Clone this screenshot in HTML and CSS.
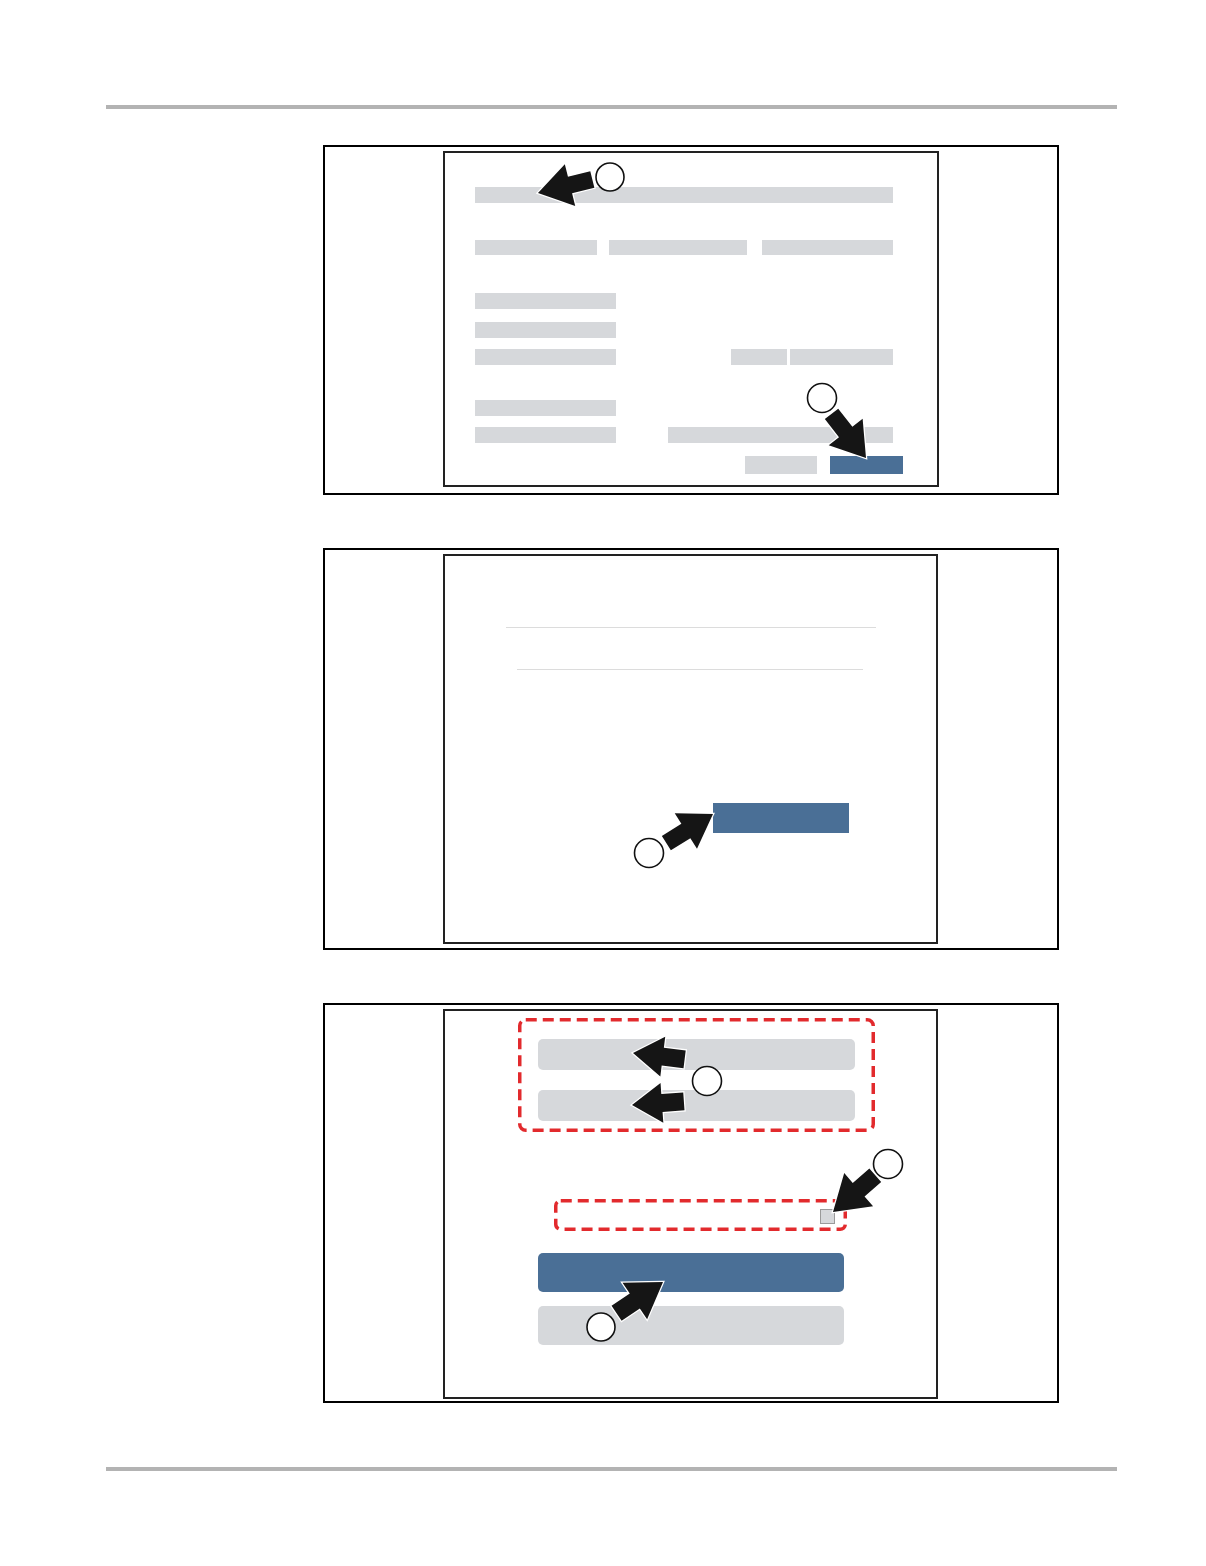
FILE: index.html
```html
<!DOCTYPE html>
<html lang="en">
<head>
<meta charset="utf-8">
<title>Manual figures</title>
<link rel="stylesheet" href="styles.css">
</head>
<body>
<div class="page">
  <div class="rule rule-top"></div>

  <!-- Figure 1 -->
  <div class="figure fig1">
    <div class="screen screen1">
      <div class="row r-a"><span class="bar w418"></span></div>
      <div class="row r-b"><span class="bar w122"></span><span class="bar w138 ml12"></span><span class="bar w131 ml15"></span></div>
      <div class="row r-c"><span class="bar w141"></span></div>
      <div class="row r-d"><span class="bar w141"></span></div>
      <div class="row r-e"><span class="bar w141"></span><span class="bar w56 ml115"></span><span class="bar w103 ml3"></span></div>
      <div class="row r-f"><span class="bar w141"></span></div>
      <div class="row r-g"><span class="bar w141"></span><span class="bar w225 ml52"></span></div>
      <div class="row r-h"><span class="btn grey w72"></span><span class="btn blue w73 ml13"></span></div>
    </div>
    <svg class="callouts" width="736" height="350" viewBox="323 145 736 350">
      <defs>
        <polygon id="arw" points="0,0 -33,-21.5 -33,-8.5 -56,-8.5 -56,8.5 -33,8.5 -33,21.5"/>
      </defs>
      <circle class="num" cx="610" cy="177" r="14"/>
      <use href="#arw" class="arrow" transform="translate(538 193) rotate(166)"/>
      <circle class="num" cx="822" cy="398" r="14.5"/>
      <use href="#arw" class="arrow" transform="translate(866 458) rotate(52)"/>
    </svg>
  </div>

  <!-- Figure 2 -->
  <div class="figure fig2">
    <div class="screen screen2">
      <div class="line l1"></div>
      <div class="line l2"></div>
      <div class="btn blue wide2"></div>
    </div>
    <svg class="callouts" width="736" height="402" viewBox="323 548 736 402">
      <defs>
        <polygon id="arw2" points="0,0 -32,-21 -32,-8.5 -55,-8.5 -55,8.5 -32,8.5 -32,21"/>
      </defs>
      <circle class="num" cx="649" cy="853" r="14.5"/>
      <use href="#arw2" class="arrow" transform="translate(713 814) rotate(-32)"/>
    </svg>
  </div>

  <!-- Figure 3 -->
  <div class="figure fig3">
    <div class="screen screen3">
      <div class="group box1">
        <div class="pill grey"></div>
        <div class="pill grey"></div>
      </div>
      <div class="group box2">
        <span class="check"></span>
      </div>
      <div class="pill blue big"></div>
      <div class="pill grey big"></div>
    </div>
    <svg class="callouts" width="736" height="400" viewBox="323 1003 736 400">
      <defs>
        <polygon id="arw3" points="0,0 -30,-20 -30,-9 -52,-9 -52,9 -30,9 -30,20"/>
        <polygon id="arw4" points="0,0 -34,-22 -34,-9 -56,-9 -56,9 -34,9 -34,22"/>
      </defs>
      <rect class="dash" x="519.75" y="1019.75" width="353.5" height="110.5" rx="6"/>
      <rect class="dash" x="555.75" y="1200.75" width="289.5" height="28.5" rx="5"/>
      <use href="#arw3" class="arrow" transform="translate(633 1053) rotate(187)"/>
      <use href="#arw3" class="arrow" transform="translate(632 1105) rotate(176)"/>
      <circle class="num" cx="707" cy="1081" r="14.5"/>
      <circle class="num" cx="888" cy="1164" r="14.5"/>
      <use href="#arw4" class="arrow" transform="translate(833 1212) rotate(139)"/>
      <use href="#arw4" class="arrow" transform="translate(663 1282) rotate(-34)"/>
      <circle class="num" cx="601" cy="1327" r="14"/>
    </svg>
  </div>

  <div class="rule rule-bottom"></div>
</div>
</body>
</html>
```

FILE: styles.css
```css
* { box-sizing: border-box; }

html, body {
  margin: 0;
  padding: 0;
  background: #ffffff;
  font-family: "Liberation Sans", Arial, sans-serif;
}

.page {
  width: 1206px;
  min-height: 1566px;
  padding-top: 105px;
  display: flex;
  flex-direction: column;
}

.rule {
  margin-left: 106px;
  width: 1011px;
  height: 4px;
  background: #b3b3b3;
}

.rule-bottom { margin-top: 64px; }

.figure {
  position: relative;
  margin-left: 323px;
  width: 736px;
  border: 2px solid #000;
}

.fig1 { margin-top: 36px; height: 350px; }
.fig2 { margin-top: 53px; height: 402px; }
.fig3 { margin-top: 53px; height: 400px; }

.screen {
  margin-left: 118px;
  margin-top: 4px;
  border: 2px solid #222;
  background: #fff;
}

.callouts {
  position: absolute;
  left: -2px;
  top: -2px;
  overflow: visible;
}

.num {
  fill: #fff;
  stroke: #111;
  stroke-width: 1.6;
}

.arrow {
  fill: #151515;
  stroke: #fff;
  stroke-width: 2.5;
  stroke-linejoin: miter;
  paint-order: stroke;
}

.dash {
  fill: none;
  stroke: #e22a2d;
  stroke-width: 3.5;
  stroke-dasharray: 11 6;
}

/* ---------- Figure 1 ---------- */
.screen1 {
  width: 496px;
  height: 336px;
  padding-left: 30px;
  display: flex;
  flex-direction: column;
}

.row { display: flex; height: 16px; }
.r-a { margin-top: 34px; }
.r-b { margin-top: 37px; height: 15px; }
.r-c { margin-top: 38px; }
.r-d { margin-top: 13px; }
.r-e { margin-top: 11px; }
.r-f { margin-top: 35px; }
.r-g { margin-top: 11px; }
.r-h { margin-top: 13px; height: 18px; }
.r-h .btn:first-child { margin-left: 270px; }

.bar {
  display: block;
  height: 100%;
  background: #d6d8db;
}

.btn { display: block; height: 100%; }
.grey { background: #d6d8db; }
.blue { background: #4a6f96; }

.w418 { width: 418px; }
.w122 { width: 122px; }
.w138 { width: 138px; }
.w131 { width: 131px; }
.w141 { width: 141px; }
.w56 { width: 56px; }
.w103 { width: 103px; }
.w225 { width: 225px; }
.w72 { width: 72px; }
.w73 { width: 73px; }

.ml3 { margin-left: 3px; }
.ml12 { margin-left: 12px; }
.ml13 { margin-left: 13px; }
.ml15 { margin-left: 15px; }
.ml52 { margin-left: 52px; }
.ml115 { margin-left: 115px; }

/* ---------- Figure 2 ---------- */
.screen2 {
  width: 495px;
  height: 390px;
  display: flex;
  flex-direction: column;
}

.line {
  height: 1px;
  background: #dcdcdc;
}
.l1 { margin-top: 71px; margin-left: 61px; width: 370px; }
.l2 { margin-top: 41px; margin-left: 72px; width: 346px; }

.wide2 {
  margin-top: 133px;
  margin-left: 268px;
  width: 136px;
  height: 30px;
}

/* ---------- Figure 3 ---------- */
.screen3 {
  width: 495px;
  height: 390px;
  display: flex;
  flex-direction: column;
  padding-left: 93px;
}

.box1 {
  margin-top: 8px;
  margin-left: -20px;
  width: 357px;
  height: 114px;
  padding: 20px 0 0 20px;
  display: flex;
  flex-direction: column;
  gap: 20px;
}

.pill {
  border-radius: 5px;
}

.box1 .pill {
  width: 317px;
  height: 31px;
}

.box2 {
  margin-top: 67px;
  margin-left: 16px;
  width: 293px;
  height: 32px;
  display: flex;
  align-items: center;
  justify-content: flex-end;
  padding-right: 12px;
}

.check {
  display: block;
  width: 15px;
  height: 15px;
  background: #d6d8db;
  border: 1px solid #9a9a9a;
}

.big {
  width: 306px;
  height: 39px;
}
.pill.blue.big { margin-top: 21px; }
.pill.grey.big { margin-top: 14px; }
```
